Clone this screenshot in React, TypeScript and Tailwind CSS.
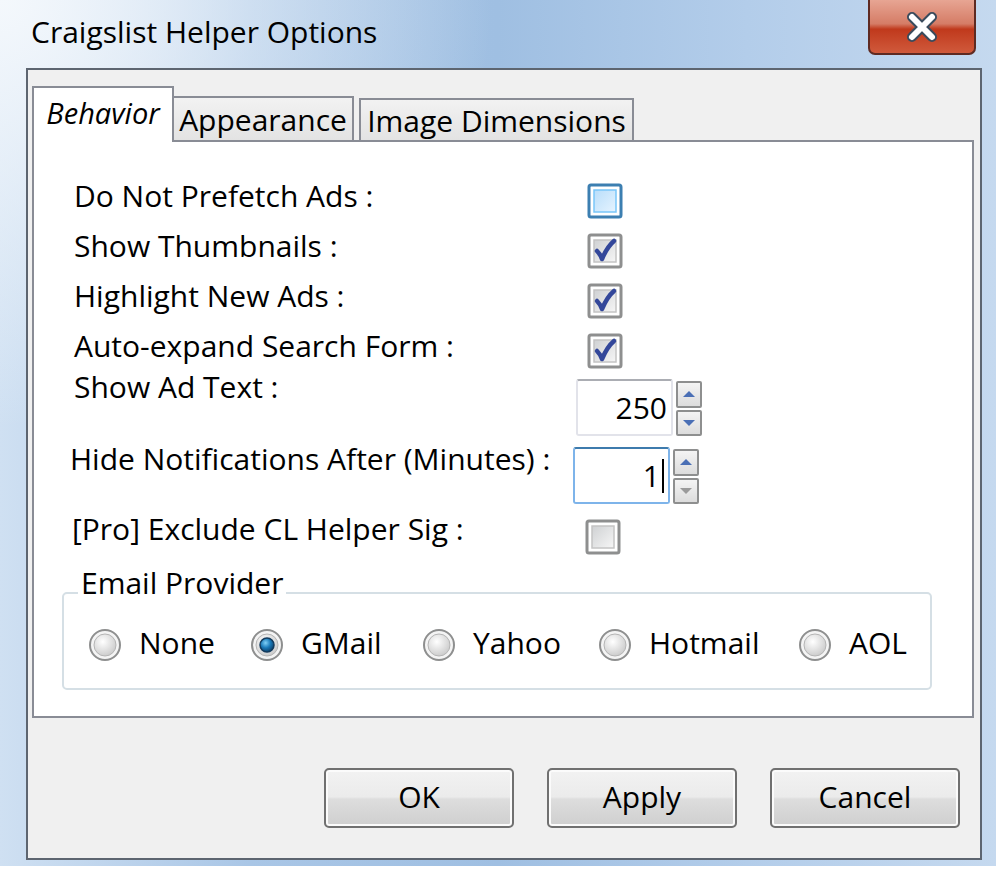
import React from "react";

const font = { fontFamily: '"Open Sans", "Noto Sans", sans-serif' };

function CheckBox({ checked, hot }: { checked?: boolean; hot?: boolean }) {
  return (
    <svg width="36" height="36" viewBox="0 0 36 36">
      <defs>
        <linearGradient id={hot ? "cbHot" : "cbIn"} x1="0" y1="0" x2="1" y2="1">
          <stop offset="0" stopColor={hot ? "#b9defa" : "#cfd1d3"} />
          <stop offset="1" stopColor={hot ? "#e6f4ff" : "#f6f6f6"} />
        </linearGradient>
      </defs>
      <rect x="2" y="2" width="32" height="32" rx="2" fill="#fff" stroke={hot ? "#3c7fb1" : "#8e8f8f"} strokeWidth="3" />
      <rect x="7" y="7" width="22" height="22" fill={`url(#${hot ? "cbHot" : "cbIn"})`} stroke={hot ? "#79c6f9" : "#c4c4c4"} strokeWidth="1.5" />
      {checked && (
        <path d="M10 18 C12 20 14 23 15 26 C18 19 21 13 27 8" fill="none" stroke="#33479a" strokeWidth="4.5" strokeLinecap="round" strokeLinejoin="round" />
      )}
    </svg>
  );
}

function Radio({ checked }: { checked?: boolean }) {
  return (
    <svg width="34" height="34" viewBox="0 0 34 34">
      <defs>
        <radialGradient id="rIn" cx="0.4" cy="0.35" r="0.7">
          <stop offset="0" stopColor="#ffffff" />
          <stop offset="1" stopColor="#c9c9c9" />
        </radialGradient>
        <radialGradient id="rDot" cx="0.4" cy="0.35" r="0.7">
          <stop offset="0" stopColor="#7fd0f7" />
          <stop offset="0.5" stopColor="#1a7ab9" />
          <stop offset="1" stopColor="#0b3b63" />
        </radialGradient>
      </defs>
      <circle cx="17" cy="17" r="15" fill="#f4f4f4" stroke="#8e8f8f" strokeWidth="2" />
      <circle cx="17" cy="17" r="11" fill="url(#rIn)" stroke="#b5b5b5" strokeWidth="1" />
      {checked && <circle cx="17" cy="17" r="7" fill="url(#rDot)" stroke="#123a5c" strokeWidth="1.5" />}
    </svg>
  );
}

function Spin({ value, focus }: { value: string; focus?: boolean }) {
  return (
    <div className="flex items-stretch gap-[3px]">
      <div
        className={`w-[97px] h-[57px] bg-white border-2 rounded-[3px] flex items-center justify-end pr-[4px] text-[30px] text-black ${
          focus ? "border-[#7eb4ea] border-t-[#3d7bad]" : "border-[#e2e3ea] border-t-[#abadb3]"
        }`}
      >
        <span>{value}</span>
        {focus && <span className="inline-block w-[2px] h-[34px] bg-black ml-[2px]" />}
      </div>
      <div className="flex flex-col gap-[2px] w-[26px] h-[55px] mt-[2px]">
        {[0, 1].map((i) => (
          <div
            key={i}
            className="flex-1 border-2 border-[#8e8f8f] rounded-[2px] bg-gradient-to-b from-[#f4f4f4] to-[#dcdcdc] flex items-center justify-center"
          >
            <svg width="14" height="8" viewBox="0 0 14 8">
              {i === 0 ? (
                <path d="M1 7 L7 1 L13 7 Z" fill="#4a6fb5" />
              ) : (
                <path d="M1 1 L7 7 L13 1 Z" fill={focus ? "#9a9a9a" : "#4a6fb5"} />
              )}
            </svg>
          </div>
        ))}
      </div>
    </div>
  );
}

function Button({ label }: { label: string }) {
  return (
    <div className="w-[190px] h-[60px] rounded-[5px] border-2 border-[#707070] bg-[linear-gradient(to_bottom,#f2f2f2_0%,#ebebeb_48%,#dddddd_52%,#cfcfcf_100%)] shadow-[inset_0_0_0_2px_#fbfbfb] flex items-center justify-center text-[30px] text-black pb-[4px]">
      {label}
    </div>
  );
}

export default function App() {
  return (
    <div className="w-[1000px] h-[877px] bg-white overflow-hidden text-black" style={font}>
      <div className="w-[996px] h-[866px] bg-[radial-gradient(ellipse_at_0%_0%,#f4f8fc_0%,rgba(244,248,252,0)_35%),linear-gradient(to_right,#cfe0f2_0%,#a9c6e6_25%,#9fbfe2_50%,#b3cdea_75%,#c5d9ef_100%)] flex flex-col">
        {/* title bar */}
        <div className="h-[68px] flex items-start justify-between">
          <div className="text-[30px] pl-[31px] pt-[9px] text-black">Craigslist Helper Options</div>
          <div className="w-[108px] h-[55px] mr-[20px] rounded-b-[7px] border-2 border-t-0 border-[#5e2a22] bg-[linear-gradient(to_bottom,#e7a593_0%,#d57c66_45%,#c0391c_55%,#d05a3c_100%)] flex items-center justify-center">
            <svg width="36" height="30" viewBox="0 0 36 30">
              <path d="M8 5 L28 25 M28 5 L8 25" stroke="#3a4b5c" strokeWidth="10" strokeLinecap="round" />
              <path d="M8 5 L28 25 M28 5 L8 25" stroke="#ffffff" strokeWidth="6" strokeLinecap="round" />
            </svg>
          </div>
        </div>

        {/* client area */}
        <div className="ml-[26px] mr-[14px] flex-1 bg-[#f0f0f0] border-2 border-[#5d6570] flex flex-col">
          {/* tabs */}
          <div className="h-[70px] flex items-end pl-[4px]">
            <div className="w-[142px] h-[56px] bg-white border-2 border-b-0 border-[#898c95] flex items-center justify-center italic text-[29px] -mb-[2px] relative z-10 pb-[4px]">
              Behavior
            </div>
            <div className="w-[180px] h-[44px] bg-[linear-gradient(to_bottom,#f2f2f2,#e3e3e3)] border-2 border-b-0 border-l-0 border-[#898c95] flex items-center justify-center text-[30px]">
              Appearance
            </div>
            <div className="w-[275px] h-[42px] ml-[5px] bg-[linear-gradient(to_bottom,#f2f2f2,#e3e3e3)] border-2 border-b-0 border-[#898c95] flex items-center justify-center text-[30px]">
              Image Dimensions
            </div>
          </div>

          {/* panel */}
          <div className="ml-[4px] mr-[6px] h-[578px] bg-white border-2 border-[#898c95] pt-[29px] pl-[40px] text-[30px]">
            {[
              { label: "Do Not Prefetch Ads :", checked: false, hot: true },
              { label: "Show Thumbnails :", checked: true },
              { label: "Highlight New Ads :", checked: true },
              { label: "Auto-expand Search Form :", checked: true },
            ].map((r) => (
              <div key={r.label} className="h-[50px] flex items-center">
                <div className="w-[502px] leading-[38px]">{r.label}</div>
                <div className="ml-[11px] mt-[10px]">
                  <CheckBox checked={r.checked} hot={r.hot} />
                </div>
              </div>
            ))}

            <div className="h-[72px] flex items-start">
              <div className="w-[502px] leading-[38px] -mt-[3px]">Show Ad Text :</div>
              <div className="mt-[8px]">
                <Spin value="250" />
              </div>
            </div>

            <div className="h-[68px] flex items-start">
              <div className="w-[502px] leading-[38px] -mt-[3px] -ml-[4px]">Hide Notifications After (Minutes) :</div>
              <div className="mt-[4px] ml-[1px]">
                <Spin value="1" focus />
              </div>
            </div>

            <div className="h-[40px] flex items-center">
              <div className="w-[502px] leading-[38px] -mt-[4px] -ml-[2px]">[Pro] Exclude CL Helper Sig :</div>
              <div className="ml-[11px] mt-[12px]">
                <CheckBox />
              </div>
            </div>

            <div className="relative mt-[41px] ml-[-12px] w-[870px] h-[98px] border-2 border-[#d5dfe5] rounded-[5px]">
              <span className="absolute left-[14px] -top-[31px] px-[3px] leading-[40px] bg-white">Email Provider</span>
              <div className="flex items-center pl-[24px] mt-[30px]">
                {[
                  { l: "None", w: "w-[162px]" },
                  { l: "GMail", w: "w-[172px]", c: true },
                  { l: "Yahoo", w: "w-[176px]" },
                  { l: "Hotmail", w: "w-[200px]" },
                  { l: "AOL", w: "w-[120px]" },
                ].map((o) => (
                  <div key={o.l} className={`${o.w} flex items-center gap-[17px]`}>
                    <Radio checked={o.c} />
                    <span className="-mt-[4px]">{o.l}</span>
                  </div>
                ))}
              </div>
            </div>
          </div>

          {/* buttons */}
          <div className="flex-1 flex items-center justify-end gap-[33px] pr-[20px] pt-[20px]">
            <Button label="OK" />
            <Button label="Apply" />
            <Button label="Cancel" />
          </div>
        </div>
        <div className="h-[6px]" />
      </div>
    </div>
  );
}
